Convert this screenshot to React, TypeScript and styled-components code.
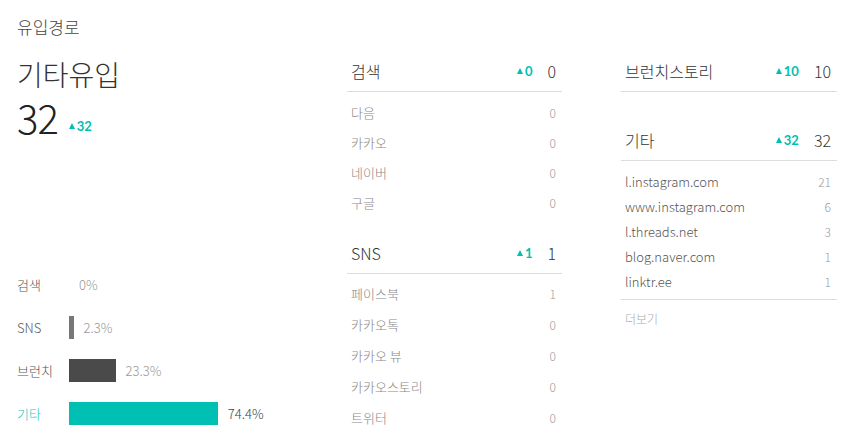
import styled, { createGlobalStyle } from 'styled-components';

const GlobalStyle = createGlobalStyle`
  body {
    margin: 0;
    background: #fff;
    font-family: "Noto Sans CJK KR", "Noto Sans", sans-serif;
    color: #333;
  }
`;

const TEAL = '#00bfb3';

const searchRows = [
  { name: '다음', value: 0 },
  { name: '카카오', value: 0 },
  { name: '네이버', value: 0 },
  { name: '구글', value: 0 },
];

const snsRows = [
  { name: '페이스북', value: 1 },
  { name: '카카오톡', value: 0 },
  { name: '카카오 뷰', value: 0 },
  { name: '카카오스토리', value: 0 },
  { name: '트위터', value: 0 },
];

const etcRows = [
  { name: 'l.instagram.com', value: 21 },
  { name: 'www.instagram.com', value: 6 },
  { name: 'l.threads.net', value: 3 },
  { name: 'blog.naver.com', value: 1 },
  { name: 'linktr.ee', value: 1 },
];

const bars = [
  { label: '검색', pct: 0, color: '#777' },
  { label: 'SNS', pct: 2.3, color: '#777' },
  { label: '브런치', pct: 23.3, color: '#4a4a4a' },
  { label: '기타', pct: 74.4, color: TEAL, active: true },
];

const Up = ({ n, big }: { n: number; big?: boolean }) => (
  <Badge $lift={big}>
    <Tri />
    {n}
  </Badge>
);

const App = () => {
  return (
    <Page>
      <GlobalStyle />
      <Title>유입경로</Title>
      <Columns>
        <Summary>
          <BigName>기타유입</BigName>
          <BigRow>
            <BigNum>32</BigNum>
            <Up n={32} big />
          </BigRow>
          <Chart>
            {bars.map((b) => (
              <BarRow key={b.label}>
                <BarLabel $active={b.active}>{b.label}</BarLabel>
                <Bar $color={b.color} style={{ width: b.pct * 2 }} />
                <BarPct $active={b.active}>{b.pct}%</BarPct>
              </BarRow>
            ))}
          </Chart>
        </Summary>

        <Col>
          <Head>
            <HeadName>검색</HeadName>
            <Up n={0} />
            <HeadValue>0</HeadValue>
          </Head>
          <List $top={5}>
            {searchRows.map((r) => (
              <Item key={r.name} $h={30}>
                <span>{r.name}</span>
                <ItemValue>{r.value}</ItemValue>
              </Item>
            ))}
          </List>
          <Head>
            <HeadName>SNS</HeadName>
            <Up n={1} />
            <HeadValue>1</HeadValue>
          </Head>
          <List $top={4}>
            {snsRows.map((r) => (
              <Item key={r.name} $h={31}>
                <span>{r.name}</span>
                <ItemValue>{r.value}</ItemValue>
              </Item>
            ))}
          </List>
        </Col>

        <Col>
          <Head>
            <HeadName>브런치스토리</HeadName>
            <Up n={10} />
            <HeadValue>10</HeadValue>
          </Head>
          <Spacer />
          <Head>
            <HeadName>기타</HeadName>
            <Up n={32} />
            <HeadValue>32</HeadValue>
          </Head>
          <DomainList>
            {etcRows.map((r) => (
              <Domain key={r.name}>
                <span>{r.name}</span>
                <ItemValue>{r.value}</ItemValue>
              </Domain>
            ))}
          </DomainList>
          <More>더보기</More>
        </Col>
      </Columns>
    </Page>
  );
};

const Page = styled.div`
  width: 848px;
  height: 442px;
  box-sizing: border-box;
  padding: 14px 11px 0 17px;
  overflow: hidden;
`;

const Title = styled.div`
  font-size: 17px;
  font-weight: 300;
  color: #444;
  line-height: 26px;
`;

const Columns = styled.div`
  display: grid;
  grid-template-columns: 271px 215px 216px;
  column-gap: 59px;
  margin-top: 14px;
`;

const Summary = styled.div`
  display: flex;
  flex-direction: column;
`;

const BigName = styled.div`
  font-size: 28px;
  font-weight: 300;
  color: #333;
  line-height: 40px;
`;

const BigRow = styled.div`
  display: flex;
  align-items: flex-end;
  gap: 11px;
`;

const BigNum = styled.div`
  font-size: 40px;
  font-weight: 300;
  color: #222;
  line-height: 46px;
  letter-spacing: -1px;
`;

const Badge = styled.span<{ $lift?: boolean }>`
  display: inline-flex;
  align-items: center;
  gap: 2px;
  color: ${TEAL};
  font-family: "Lato", "Noto Sans", sans-serif;
  font-weight: 700;
  font-size: 13px;
  line-height: 1;
  margin-bottom: ${(p) => (p.$lift ? '7px' : '0')};
`;

const Tri = styled.span`
  width: 0;
  height: 0;
  border-left: 3.5px solid transparent;
  border-right: 3.5px solid transparent;
  border-bottom: 6px solid ${TEAL};
  margin-bottom: 1px;
`;

const Chart = styled.div`
  margin-top: 133px;
  display: flex;
  flex-direction: column;
  gap: 20px;
`;

const BarRow = styled.div`
  display: flex;
  align-items: center;
  height: 23px;
`;

const BarLabel = styled.div<{ $active?: boolean }>`
  width: 52px;
  font-size: 13px;
  font-weight: 300;
  color: ${(p) => (p.$active ? '#2cc4ba' : '#555')};
`;

const Bar = styled.div<{ $color: string }>`
  height: 23px;
  background: ${(p) => p.$color};
  margin-right: 10px;
`;

const BarPct = styled.div<{ $active?: boolean }>`
  font-size: 13px;
  font-weight: 300;
  color: ${(p) => (p.$active ? '#444' : '#999')};
`;

const Col = styled.div`
  display: flex;
  flex-direction: column;
`;

const Head = styled.div`
  display: flex;
  align-items: center;
  height: 38px;
  box-sizing: border-box;
  padding: 0 6px 3px 4px;
  border-bottom: 1px solid #ddd;
`;

const HeadName = styled.div`
  flex: 1;
  font-size: 16px;
  font-weight: 300;
  color: #333;
`;

const HeadValue = styled.div`
  margin-left: 15px;
  font-size: 16px;
  font-weight: 300;
  color: #333;
`;

const List = styled.div<{ $top: number }>`
  padding: ${(p) => p.$top}px 6px 19px 4px;
`;

const Item = styled.div<{ $h: number }>`
  display: flex;
  justify-content: space-between;
  align-items: center;
  height: ${(p) => p.$h}px;
  font-size: 13px;
  font-weight: 300;
  color: #888;
`;

const ItemValue = styled.span`
  font-size: 12px;
  color: #999;
`;

const Spacer = styled.div`
  height: 31px;
`;

const DomainList = styled.div`
  padding: 8px 6px 5px 4px;
  border-bottom: 1px solid #ddd;
`;

const Domain = styled.div`
  display: flex;
  justify-content: space-between;
  align-items: center;
  height: 25px;
  font-size: 13px;
  font-weight: 300;
  color: #555;
`;

const More = styled.div`
  padding: 10px 4px;
  font-size: 12px;
  font-weight: 300;
  color: #aaa;
`;

export default App;
